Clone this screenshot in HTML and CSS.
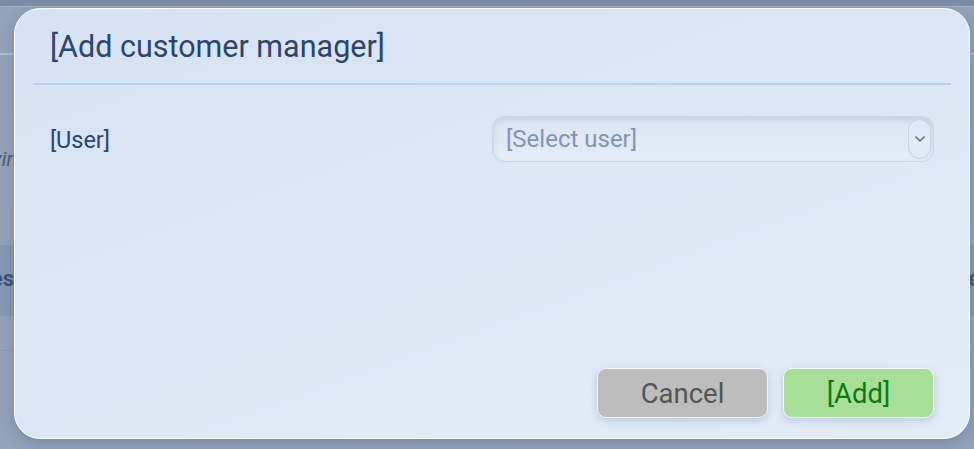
FILE: index.html
```html
<!DOCTYPE html>
<html>
<head>
<meta charset="utf-8">
<link rel="stylesheet" href="styles.css">
</head>
<body>
<div class="page">
  <div class="topbar"></div>
  <div class="row r1"></div>
  <div class="row r2"><span class="ital">Servir</span></div>
  <div class="row r3"><span class="bold">Names</span><span class="bold right">e</span></div>
  <div class="row r4"></div>
</div>
<div class="modal">
  <div class="modal-header">
    <h2 class="title">[Add customer manager]</h2>
  </div>
  <div class="modal-body">
    <div class="field">
      <label class="label">[User]</label>
      <div class="select">
        <span class="placeholder">[Select user]</span>
        <span class="arrow">
          <svg width="10" height="6" viewBox="0 0 10 6"><path d="M1 1 L5 5 L9 1" fill="none" stroke="#5a6f95" stroke-width="1.6" stroke-linecap="round" stroke-linejoin="round"/></svg>
        </span>
      </div>
    </div>
  </div>
  <div class="modal-footer">
    <button class="btn cancel">Cancel</button>
    <button class="btn add">[Add]</button>
  </div>
</div>
</body>
</html>
```
FILE: styles.css
```css
html, body {
  margin: 0;
  padding: 0;
  width: 974px;
  height: 449px;
  overflow: hidden;
  font-family: Roboto, "Liberation Sans", sans-serif;
}
body {
  background: #94a3ba;
  position: relative;
}
.page {
  display: flex;
  flex-direction: column;
}
.topbar {
  height: 6px;
  background: #7d8ca6;
  border-bottom: 1px solid #a4b2c7;
}
.row {
  position: relative;
}
.r1 {
  height: 46px;
  border-bottom: 2px solid #a9c1de;
}
.r2 {
  height: 190px;
  border-bottom: 1px solid #8c9bb3;
}
.ital {
  position: absolute;
  right: 961px;
  top: 92px;
  font-style: italic;
  font-size: 20px;
  color: #4a5a77;
  white-space: nowrap;
}
.r3 {
  height: 69px;
  background: #8798b2;
  border-bottom: 1px solid #8c9bb3;
}
.bold {
  position: absolute;
  right: 960px;
  top: 20px;
  font-weight: bold;
  font-size: 22px;
  color: #3e5378;
  white-space: nowrap;
}
.bold.right {
  right: auto;
  left: 968px;
}
.r4 {
  height: 34px;
  border-bottom: 1px solid #8c9bb3;
}
.modal {
  position: absolute;
  left: 14px;
  top: 8px;
  width: 956px;
  height: 431px;
  box-sizing: border-box;
  border: 1.5px solid #ffffff;
  border-radius: 26px;
  background: linear-gradient(160deg, #d6e3f4 0%, #dce7f5 50%, #e3edf9 100%);
  box-shadow: 0 4px 14px rgba(40, 60, 100, 0.25);
  display: flex;
  flex-direction: column;
}
.modal-header {
  margin: 0 18px;
  padding: 18px 17px 0;
  height: 55.5px;
  border-bottom: 2px solid #b2d4f0;
}
.title {
  margin: 0;
  font-size: 30.5px;
  font-weight: 400;
  color: #2d4569;
  line-height: 40px;
}
.modal-body {
  flex: 1;
  padding: 31px 35px 0 35px;
}
.field {
  display: flex;
  align-items: center;
  justify-content: space-between;
}
.label {
  font-size: 23.5px;
  color: #2d4569;
  margin-top: 3px;
}
.select {
  width: 442px;
  height: 46px;
  box-sizing: border-box;
  border: 1.5px solid #c9d6e8;
  border-radius: 12px;
  background: linear-gradient(180deg, #dbe6f4 0%, #e4edf8 100%);
  box-shadow: inset 0 3px 6px rgba(120, 145, 185, 0.25);
  display: flex;
  align-items: center;
  justify-content: space-between;
  padding: 0 2px 0 13px;
}
.placeholder {
  font-size: 24px;
  color: #8393b3;
  margin-top: 0;
}
.arrow {
  width: 23px;
  height: 40px;
  box-sizing: border-box;
  border: 1.5px solid #c5d2e5;
  border-radius: 12px;
  background: #e1eaf6;
  display: flex;
  align-items: center;
  justify-content: center;
}
.modal-footer {
  display: flex;
  justify-content: flex-end;
  gap: 15px;
  padding: 0 35px 20px 0;
}
.btn {
  height: 50px;
  box-sizing: border-box;
  border: 1.5px solid #f2f5fa;
  border-radius: 9px;
  font-family: Roboto, "Liberation Sans", sans-serif;
  font-size: 27.5px;
  box-shadow: 0 3px 8px rgba(80, 100, 140, 0.25);
  padding: 0;
}
.cancel {
  width: 171px;
  background: #bdbdbd;
  color: #555555;
}
.add {
  width: 151px;
  background: #a7df98;
  color: #0b7a10;
}
```
